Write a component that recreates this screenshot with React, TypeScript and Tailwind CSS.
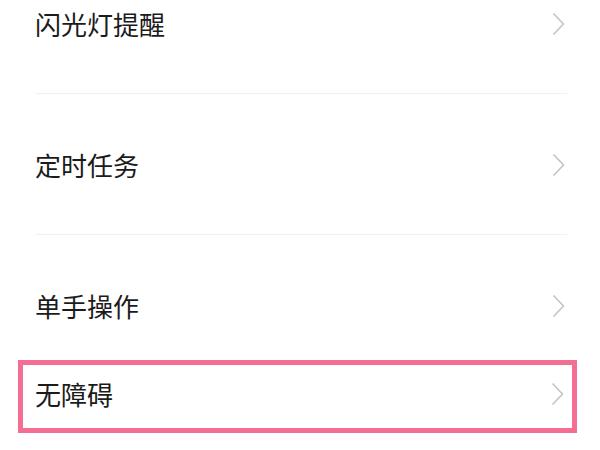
import { Fragment } from 'react'

const items = ['闪光灯提醒', '定时任务', '单手操作']

function Chevron() {
  return (
    <svg width="13" height="24" viewBox="0 0 13 24" fill="none" className="shrink-0">
      <polyline points="1.5,1.5 11.5,12 1.5,22.5" stroke="#c4c4c4" strokeWidth="1.6" />
    </svg>
  )
}

function Row({ label }: { label: string }) {
  return (
    <div className="flex h-[47px] items-center justify-between">
      <span className="text-[26px] leading-none text-[#1b1b1b]">{label}</span>
      <Chevron />
    </div>
  )
}

export default function App() {
  return (
    <div
      className="h-[450px] w-[600px] overflow-hidden bg-white"
      style={{ fontFamily: '"Noto Sans CJK SC", "Noto Sans", sans-serif' }}
    >
      <div className="-mt-[47px]">
        {items.map((label, i) => (
          <Fragment key={label}>
            <div className="pl-[35px] pr-[35px] pt-[47px]">
              <Row label={label} />
              {i < items.length - 1 && <div className="-mr-[2px] mt-[46px] h-px bg-[#f1f1f1]" />}
            </div>
          </Fragment>
        ))}
      </div>

      <div className="ml-[18px] mt-[31px] w-[559px] border-[5px] border-[#f46e92] pl-[12px] pr-[8px] pt-[5px] pb-[11px]">
        <Row label="无障碍" />
      </div>
    </div>
  )
}
